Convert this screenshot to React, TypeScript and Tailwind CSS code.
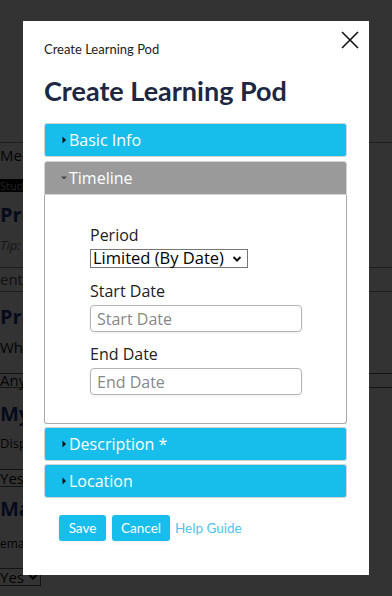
import React from "react";

const sans = "font-['Open_Sans','Noto_Sans',sans-serif]";
const lato = "font-['Lato','Liberation_Sans',sans-serif]";

function Caret({ open }: { open?: boolean }) {
  return open ? (
    <svg width="8" height="8" viewBox="0 0 8 8" className="shrink-0">
      <path d="M1 2.5 L7 2.5 L4 5.5 Z" fill="#444" />
    </svg>
  ) : (
    <svg width="8" height="8" viewBox="0 0 8 8" className="shrink-0">
      <path d="M2.5 0.5 L6 4 L2.5 7.5 Z" fill="#111" />
    </svg>
  );
}

function Header({ title, open }: { title: string; open?: boolean }) {
  return (
    <div
      className={`h-[34px] flex items-center gap-[1px] pl-[15px] border border-[#d4d4d4] text-white text-[16px] ${sans} ${
        open ? "bg-[#9a9a9a] rounded-t-[3px]" : "bg-[#17bdeb] rounded-[3px]"
      }`}
    >
      <Caret open={open} />
      <span className="leading-none">{title}</span>
    </div>
  );
}

function BackgroundPage() {
  return (
    <div className={`bg-white h-[596px] text-[#111] ${sans} text-[15px] overflow-hidden`}>
      <div className="h-[143px] border-b border-[#999]" />
      <div className="h-[24px] leading-[24px]">Members</div>
      <div className="mt-[12px] bg-black text-[#aaa] text-[11px] w-[80px] h-[13px] leading-[13px]">Students</div>
      <div className="h-[46px] leading-[46px] text-[#1d3b8a] text-[20px] font-bold">Profile</div>
      <div className="h-[14px] leading-[14px] italic text-[#666] text-[13px]">Tip: profile</div>
      <div className="mt-[15px] border-t border-b border-[#999] h-[25px] leading-[23px] text-[#555]">enter</div>
      <div className="h-[50px] leading-[50px] text-[#1d3b8a] text-[20px] font-bold">Profile</div>
      <div className="h-[10px] leading-[10px]">Who</div>
      <div className="mt-[21px] border-t border-b border-[#666] h-[15px] leading-[13px]">Anyone</div>
      <div className="h-[52px] leading-[52px] text-[#1d3b8a] text-[20px] font-bold">My Class</div>
      <div className="h-[6px] leading-[6px] text-[13px]">Display</div>
      <div className="mt-[23px] border border-l-0 border-[#666] h-[18px] leading-[16px] w-[40px]">Yes</div>
      <div className="h-[44px] leading-[44px] text-[#1d3b8a] text-[20px] font-bold">Mail</div>
      <div className="h-[26px] leading-[26px] text-[12px]">email</div>
      <div className="mt-[11px] border border-l-0 border-[#666] h-[18px] w-[41px] flex items-center gap-[4px] leading-none">
        Yes
        <svg width="10" height="8" viewBox="0 0 10 8">
          <path d="M1.5 2 L5 5.5 L8.5 2" stroke="#000" strokeWidth="2" fill="none" />
        </svg>
      </div>
    </div>
  );
}

export default function App() {
  return (
    <div className="relative w-[392px] h-[596px] overflow-hidden">
      <BackgroundPage />

      {/* dim overlay */}
      <div className="absolute inset-0 bg-black/80" />

      {/* modal */}
      <div className="absolute left-[23px] top-[21px] w-[346px] h-[554px] bg-white pl-[21px] pr-[22px]">
        <button className="absolute right-[10px] top-[10px] w-[18px] h-[18px]">
          <svg width="18" height="18" viewBox="0 0 18 18">
            <path d="M1 1 L17 17 M17 1 L1 17" stroke="#111" strokeWidth="1.6" />
          </svg>
        </button>

        <div className={`pt-[19px] text-[13px] leading-[18px] text-[#222] ${lato}`}>Create Learning Pod</div>
        <h1 className={`mt-[17px] text-[27px] font-bold leading-[32px] text-[#1e2742] ${lato}`}>
          Create Learning Pod
        </h1>

        <div className="mt-[16px] flex flex-col">
          <Header title="Basic Info" />
          <div className="mt-[4px]">
            <Header title="Timeline" open />
            <div className={`border border-t-0 border-[#aaa] rounded-b-[3px] pl-[45px] pt-[30px] pb-[28px] ${sans} text-[16px] text-[#222]`}>
              <div className="leading-[20px]">Period</div>
              <div className="mt-[4px] w-[158px] h-[19px] border border-[#767676] flex items-center justify-between pl-[2px] pr-[5px] text-[16.5px] text-black leading-none">
                <span>Limited (By Date)</span>
                <svg width="10" height="8" viewBox="0 0 10 8">
                  <path d="M1.5 2 L5 5.5 L8.5 2" stroke="#111" strokeWidth="2" fill="none" />
                </svg>
              </div>
              <div className="mt-[13px] leading-[20px]">Start Date</div>
              <input
                placeholder="Start Date"
                className="mt-[4px] w-[212px] h-[27px] border border-[#b3b3b3] rounded-[4px] px-[6px] text-[16px] placeholder:text-[#888] shadow-[0_1px_3px_rgba(0,0,0,0.08)] outline-none"
              />
              <div className="mt-[12px] leading-[20px]">End Date</div>
              <input
                placeholder="End Date"
                className="mt-[4px] w-[212px] h-[27px] border border-[#b3b3b3] rounded-[4px] px-[6px] text-[16px] placeholder:text-[#888] shadow-[0_1px_3px_rgba(0,0,0,0.08)] outline-none"
              />
            </div>
          </div>
          <div className="mt-[3px]">
            <Header title="Description *" />
          </div>
          <div className="mt-[3px]">
            <Header title="Location" />
          </div>
        </div>

        <div className={`mt-[17px] ml-[15px] flex items-center gap-[6px] ${lato} text-[13.5px]`}>
          <button className="h-[26px] w-[47px] rounded-[3px] bg-[#17bdeb] text-white shadow-[0_1px_4px_rgba(0,0,0,0.08)]">Save</button>
          <button className="h-[26px] w-[58px] rounded-[3px] bg-[#17bdeb] text-white shadow-[0_1px_4px_rgba(0,0,0,0.08)]">Cancel</button>
          <a className="text-[#4cc4ec] -ml-[1px]">Help Guide</a>
        </div>
      </div>
    </div>
  );
}
